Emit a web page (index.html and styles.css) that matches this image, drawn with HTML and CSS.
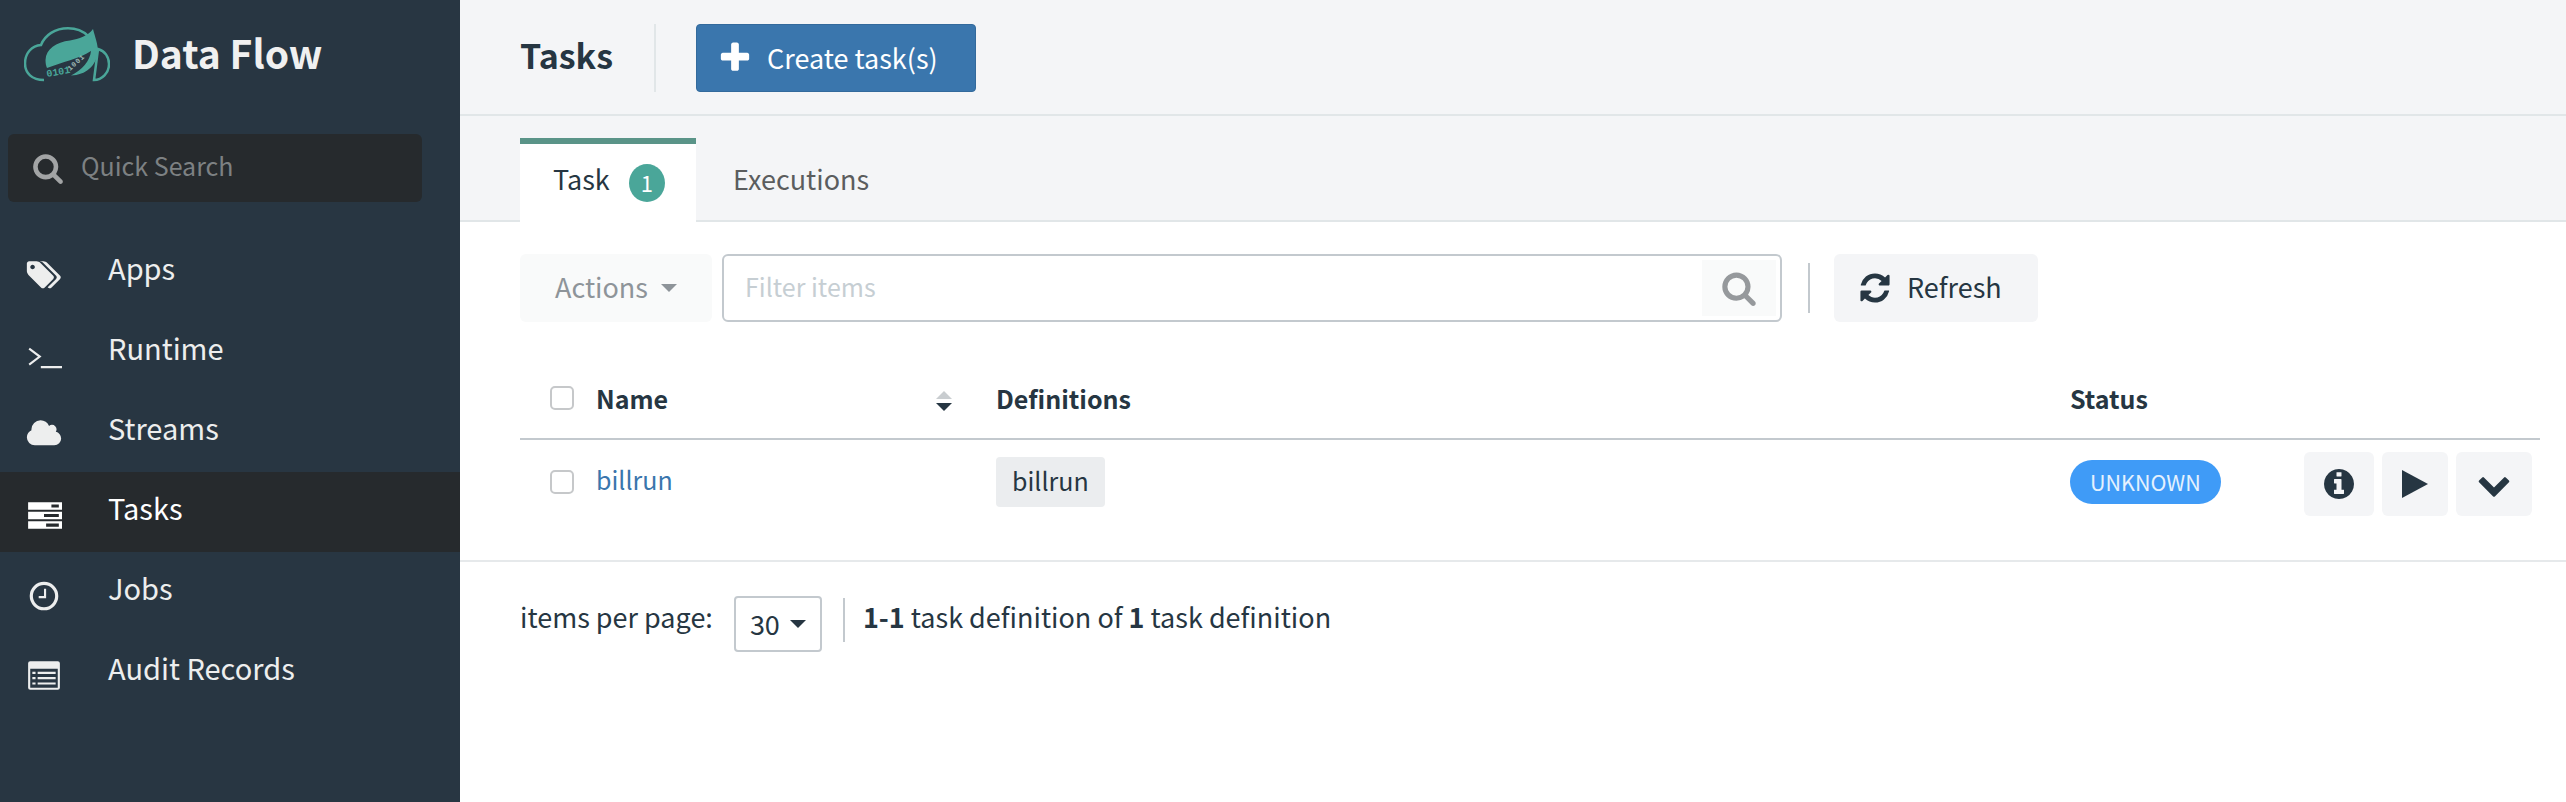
FILE: index.html
```html
<!DOCTYPE html>
<html lang="en">
<head>
  <meta charset="UTF-8" />
  <title>Data Flow - Tasks</title>
  <link rel="stylesheet" href="styles.css">
</head>
<body>
  <aside class="sidebar">
    <div class="brand">
      <svg class="brand-logo" viewBox="0 0 86 58" aria-hidden="true">
        <path class="cloud" d="M20 55C8 55 1 48 1 38.500C1 28 8 20.500 17 20C21 10 31 3.300 44 3.300C52 3.300 59 6 64 11M74 24C81 26 85 32 85 39C85 48 78 55 70 55Z"/>
        <path class="leaf" d="M69 4C64 11 55 14 46 15.500C32 17 22 24 21.500 35C21.500 38 22 41 23 43C38 37 55 34 67 26C66 36 58 45 47 50.500C62 50 72 41 74 27C74 19 71 12 69 4Z"/>
        <text class="bits" transform="translate(23 52) rotate(-10)">0101</text>
        <text class="bits bits-small" transform="translate(46 46) rotate(-42)">1001</text>
      </svg>
      <span class="brand-name">Data Flow</span>
    </div>
    <div class="quick-search">
      <svg class="icon" viewBox="0 0 1792 1792"><path d="M1216 832q0-185-131.500-316.500t-316.500-131.500-316.500 131.500-131.500 316.500 131.500 316.500 316.500 131.500 316.500-131.500 131.500-316.500zm512 832q0 52-38 90t-90 38q-54 0-90-38l-343-342q-179 124-399 124-143 0-273.500-55.500t-225-150-150-225-55.500-273.500 55.500-273.500 150-225 225-150 273.500-55.500 273.500 55.500 225 150 150 225 55.500 273.500q0 220-124 399l343 343q37 37 37 90z"/></svg>
      <span class="search-label">Quick Search</span>
    </div>
    <nav class="nav">
      <a class="nav-item">
        <svg class="nav-icon" viewBox="0 0 1920 1792"><path d="M448 448q0-53-37.500-90.500t-90.500-37.500-90.500 37.500-37.500 90.500 37.500 90.500 90.500 37.500 90.500-37.500 37.500-90.500zm1067 576q0 53-37 90l-491 492q-39 37-91 37-53 0-90-37l-715-716q-38-37-64.500-101t-26.500-117v-416q0-52 38-90t90-38h416q53 0 117 26.500t102 64.500l715 714q37 39 37 91zm384 0q0 53-37 90l-491 492q-39 37-91 37-36 0-59-14t-53-45l470-470q37-37 37-90 0-52-37-91l-715-714q-38-38-102-64.500t-117-26.500h224q53 0 117 26.500t102 64.500l715 714q37 39 37 91z"/></svg>
        <span class="nav-label">Apps</span>
      </a>
      <a class="nav-item">
        <svg class="nav-icon" viewBox="0 0 34 30"><path class="line" d="M3 9l10 7.500-10 7.500M14 26.500h21"/></svg>
        <span class="nav-label">Runtime</span>
      </a>
      <a class="nav-item">
        <svg class="nav-icon" viewBox="0 0 1920 1792"><path d="M1920 1152q0 159-112.500 271.500t-271.500 112.500h-1088q-185 0-316.500-131.500t-131.500-316.500q0-132 71-241.500t187-163.500q-2-28-2-43 0-212 150-362t362-150q158 0 286.500 88t187.500 230q70-62 166-62 106 0 181 75t75 181q0 75-41 138 129 30 213 134.500t84 239.500z" transform="translate(0 -60)"/></svg>
        <span class="nav-label">Streams</span>
      </a>
      <a class="nav-item active">
        <svg class="nav-icon" viewBox="0 0 34 30"><path fill-rule="evenodd" d="M2 3h32v7H2zM24 5v3h7V5zM2 12h32v7H2zM17 14v3h14v-3zM2 21h32v7H2zM19 23v3h12v-3z"/></svg>
        <span class="nav-label">Tasks</span>
      </a>
      <a class="nav-item">
        <svg class="nav-icon" viewBox="0 0 34 30"><circle class="line thick" cx="17" cy="16" r="12"/><path class="line" d="M18 9v8h-6"/></svg>
        <span class="nav-label">Jobs</span>
      </a>
      <a class="nav-item">
        <svg class="nav-icon" viewBox="0 0 34 30"><path fill-rule="evenodd" d="M4 2h26q2 0 2 2v23q0 2-2 2H4q-2 0-2-2V4q0-2 2-2zM4 9v18h26V9zM6 12h3v2H6zM11 12h17v2H11zM6 17h3v2H6zM11 17h17v2H11zM6 22h3v2H6zM11 22h17v2H11z"/></svg>
        <span class="nav-label">Audit Records</span>
      </a>
    </nav>
  </aside>

  <main class="main">
    <header class="page-header">
      <h1 class="page-title">Tasks</h1>
      <button type="button" class="btn-primary">
        <svg class="icon" viewBox="0 0 1792 1792"><path d="M1600 736v192q0 40-28 68t-68 28h-416v416q0 40-28 68t-68 28h-192q-40 0-68-28t-28-68v-416h-416q-40 0-68-28t-28-68v-192q0-40 28-68t68-28h416v-416q0-40 28-68t68-28h192q40 0 68 28t28 68v416h416q40 0 68 28t28 68z"/></svg>
        <span>Create task(s)</span>
      </button>
    </header>

    <div class="tabs">
      <a class="tab active"><span class="tab-label">Task</span> <span class="badge">1</span></a>
      <a class="tab"><span class="tab-label">Executions</span></a>
    </div>

    <section class="content">
      <div class="toolbar">
        <button type="button" class="btn-actions"><span class="lift">Actions</span> <i class="caret"></i></button>
        <div class="filter">
          <span class="filter-text">Filter items</span>
          <span class="filter-btn">
            <svg class="icon" viewBox="0 0 1792 1792"><path d="M1216 832q0-185-131.500-316.500t-316.500-131.500-316.500 131.500-131.500 316.500 131.500 316.500 316.500 131.500 316.500-131.500 131.500-316.500zm512 832q0 52-38 90t-90 38q-54 0-90-38l-343-342q-179 124-399 124-143 0-273.500-55.500t-225-150-150-225-55.500-273.500 55.500-273.500 150-225 225-150 273.500-55.500 273.500 55.500 225 150 150 225 55.500 273.500q0 220-124 399l343 343q37 37 37 90z"/></svg>
          </span>
        </div>
        <span class="toolbar-sep"></span>
        <button type="button" class="btn-refresh">
          <svg class="icon" viewBox="0 0 1792 1792"><path d="M1639 1056q0 5-1 7-64 268-268 434.500t-478 166.500q-146 0-282.500-55t-243.500-157l-129 129q-19 19-45 19t-45-19-19-45v-448q0-26 19-45t45-19h448q26 0 45 19t19 45-19 45l-137 137q71 66 161 102t187 36q134 0 250-65t186-179q11-17 53-117 8-23 30-23h192q13 0 22.500 9.500t9.500 22.500zm25-800v448q0 26-19 45t-45 19h-448q-26 0-45-19t-19-45 19-45l138-138q-148-137-349-137-134 0-250 65t-186 179q-11 17-53 117-8 23-30 23h-199q-13 0-22.500-9.500t-9.500-22.500v-7q65-268 270-434.500t480-166.500q146 0 284 55.500t245 156.500l130-129q19-19 45-19t45 19 19 45z"/></svg>
          <span class="lift">Refresh</span>
        </button>
      </div>

      <div class="table">
        <div class="table-row table-head">
          <span class="cell-check"><i class="checkbox"></i></span>
          <span class="cell-name">Name <i class="sort"></i></span>
          <span class="cell-def">Definitions</span>
          <span class="cell-status">Status</span>
        </div>
        <div class="table-row table-body">
          <span class="cell-check"><i class="checkbox"></i></span>
          <span class="cell-name"><a class="link">billrun</a></span>
          <span class="cell-def"><span class="chip">billrun</span></span>
          <span class="cell-status"><span class="pill">UNKNOWN</span></span>
          <span class="cell-actions">
            <button type="button" class="btn-icon btn-info">
              <svg viewBox="0 0 1536 1536"><path d="M1024 1248v-160q0-14-9-23t-23-9h-96V544q0-14-9-23t-23-9H544q-14 0-23 9t-9 23v160q0 14 9 23t23 9h96v320h-96q-14 0-23 9t-9 23v160q0 14 9 23t23 9h448q14 0 23-9t9-23zM896 352V192q0-14-9-23t-23-9H672q-14 0-23 9t-9 23v160q0 14 9 23t23 9h192q14 0 23-9t9-23zm640 416q0 209-103 385.500T1153.500 1433 768 1536t-385.500-103T103 1153.500 0 768t103-385.500T382.500 103 768 0t385.500 103T1433 382.500 1536 768z"/></svg>
            </button>
            <button type="button" class="btn-icon btn-play">
              <svg viewBox="0 0 26 28"><path d="M0 0L26 14L0 28Z"/></svg>
            </button>
            <button type="button" class="btn-icon btn-more">
              <svg viewBox="0 0 1792 1792"><path d="M1683 808l-742 741q-19 19-45 19t-45-19l-742-741q-19-19-19-45.500t19-45.500l166-165q19-19 45-19t45 19l531 531 531-531q19-19 45-19t45 19l166 165q19 19 19 45.500t-19 45.500z"/></svg>
            </button>
          </span>
        </div>
      </div>

      <div class="pager">
        <span class="pager-text">items per page:</span>
        <span class="page-size">30 <i class="caret"></i></span>
        <span class="pager-sep"></span>
        <span class="pager-text"><b>1-1</b> task definition of <b>1</b> task definition</span>
      </div>
    </section>
  </main>
</body>
</html>
```

FILE: styles.css
```css
/* Reset and base styles */
*, *::before, *::after {
  box-sizing: border-box;
}
body {
  margin: 0;
  display: flex;
  min-height: 100vh;
  font-family: "Noto Sans CJK SC", "Noto Sans", sans-serif;
  font-size: 27px;
  line-height: 36px;
  color: #263642;
  background: #fff;
}
button {
  border: none;
  font: inherit;
  padding: 0;
}
.icon {
  fill: currentColor;
  display: block;
}
.lift {
  padding-bottom: 3px;
}

/* Sidebar */
.sidebar {
  width: 460px;
  flex: none;
  background: #283642;
  color: #edeeee;
}
.brand {
  display: flex;
  align-items: center;
  height: 134px;
  padding: 0 0 28px 24px;
}
.brand-logo {
  width: 86px;
  height: 58px;
  margin-top: 2px;
}
.cloud {
  fill: none;
  stroke: #4aa699;
  stroke-width: 2.500;
}
.leaf {
  fill: #4aa699;
}
.bits {
  font-family: "Liberation Mono", monospace;
  font-size: 10px;
  font-weight: 700;
  fill: #4aa699;
}
.bits-small {
  font-size: 7px;
  letter-spacing: 1px;
  fill: #9fb9b5;
}
.brand-name {
  margin-left: 22px;
  padding-bottom: 3px;
  font-size: 39px;
  font-weight: 700;
  color: #f0f0f0;
}
.quick-search {
  display: flex;
  align-items: center;
  width: 414px;
  height: 68px;
  margin-left: 8px;
  margin-bottom: 30px;
  padding-left: 24px;
  background: #262a2d;
  border-radius: 6px;
  color: #7d8183;
  font-size: 25px;
}
.quick-search .icon {
  width: 32px;
  height: 32px;
  margin-right: 17px;
  color: #a2a4a5;
}
.search-label {
  padding-bottom: 6px;
}
.nav-item {
  display: flex;
  align-items: center;
  height: 80px;
  padding-left: 26px;
  font-size: 29px;
}
.nav-item.active {
  background: #262a2d;
  color: #fff;
}
.nav-icon {
  width: 36px;
  height: 32px;
  margin-right: 46px;
  margin-top: 6px;
  fill: currentColor;
}
.nav-label {
  padding-bottom: 10px;
}
.line {
  fill: none;
  stroke: currentColor;
  stroke-width: 2;
}
.line.thick {
  stroke-width: 3;
}

/* Main column */
.main {
  flex: 1;
  min-width: 0;
}
.page-header {
  display: flex;
  align-items: center;
  height: 116px;
  padding: 2px 0 0 60px;
  background: #f4f5f7;
  border-bottom: 2px solid #e1e6e8;
}
.page-title {
  width: 136px;
  height: 68px;
  margin: 0;
  line-height: 62px;
  font-size: 34px;
  font-weight: 700;
  border-right: 2px solid #e1e6e8;
}
.btn-primary {
  display: flex;
  align-items: center;
  width: 280px;
  height: 68px;
  margin-left: 40px;
  padding-left: 20px;
  background: #3a76ad;
  border: 1px solid #336a9c;
  border-radius: 4px;
  color: #fff;
}
.btn-primary .icon {
  width: 36px;
  height: 36px;
  margin-right: 14px;
}

.tabs {
  display: flex;
  height: 106px;
  padding: 22px 0 0 60px;
  background: #f4f5f7;
  border-bottom: 2px solid #e1e6e8;
}
.tab {
  height: 84px;
  display: flex;
  align-items: center;
  color: #5b5d5e;
  padding: 0 37px;
}
.tab-label {
  padding-bottom: 3px;
}
.tab.active {
  width: 176px;
  padding: 0 0 0 33px;
  background: #fff;
  border-top: 6px solid #5a9488;
  color: #263642;
}
.tab.active .tab-label {
  padding-bottom: 8px;
}
.badge {
  width: 36px;
  height: 38px;
  margin-left: 19px;
  border-radius: 50%;
  background: #4aa699;
  color: #fff;
  font-size: 22px;
  line-height: 37px;
  text-align: center;
}

/* Toolbar */
.toolbar {
  display: flex;
  align-items: center;
  padding: 32px 0 0 60px;
}
.btn-actions {
  display: flex;
  align-items: center;
  width: 192px;
  height: 68px;
  padding-left: 35px;
  background: #f9fafa;
  border-radius: 6px;
  color: #8e9499;
}
.caret {
  display: inline-block;
  width: 0;
  height: 0;
  margin-left: 13px;
  border-left: 8px solid transparent;
  border-right: 8px solid transparent;
  border-top: 8px solid currentColor;
}
.filter {
  display: flex;
  align-items: center;
  width: 1060px;
  height: 68px;
  margin-left: 10px;
  padding: 4px 4px 4px 21px;
  border: 2px solid #c3c9ce;
  border-radius: 6px;
}
.filter-text {
  flex: 1;
  padding-bottom: 4px;
  font-size: 25px;
  color: #c6ced3;
}
.filter-btn {
  display: flex;
  align-items: center;
  justify-content: center;
  width: 74px;
  height: 56px;
  background: #f9fafa;
  color: #96999c;
}
.filter-btn .icon {
  width: 36px;
  height: 36px;
}
.toolbar-sep {
  width: 2px;
  height: 50px;
  margin: 0 24px 0 26px;
  background: #c3c9ce;
}
.btn-refresh {
  display: flex;
  align-items: center;
  width: 204px;
  height: 68px;
  padding-left: 24px;
  background: #f4f5f7;
  border-radius: 6px;
  color: #263642;
}
.btn-refresh .icon {
  width: 34px;
  height: 34px;
  margin-right: 15px;
}

/* Table */
.table {
  margin: 40px 26px 0 60px;
}
.table-row {
  display: flex;
  align-items: center;
}
.table-head {
  height: 78px;
  padding-bottom: 4px;
  border-bottom: 2px solid #c3c9ce;
  font-weight: 700;
  font-size: 25px;
}
.table-body {
  height: 120px;
  padding-bottom: 36px;
  font-size: 25px;
}
.cell-check {
  width: 76px;
  flex: none;
  padding-left: 30px;
}
.checkbox {
  display: block;
  width: 24px;
  height: 24px;
  background: #fff;
  border: 2px solid #c6c8ca;
  border-radius: 5px;
}
.cell-name {
  position: relative;
  width: 400px;
  flex: none;
}
.table-body .cell-name {
  padding-bottom: 6px;
}
.sort {
  position: absolute;
  right: 44px;
  top: 23px;
  width: 0;
  height: 0;
  border-top: 8px solid #263642;
  border-left: 8px solid transparent;
  border-right: 8px solid transparent;
}
.sort::before {
  content: "";
  position: absolute;
  left: -8px;
  top: -20px;
  border-bottom: 8px solid #c9cdd0;
  border-left: 8px solid transparent;
  border-right: 8px solid transparent;
}
.cell-def {
  width: 1074px;
  flex: none;
}
.cell-status {
  width: 234px;
  flex: none;
}
.link {
  color: #3a76ad;
}
.chip {
  display: inline-block;
  height: 50px;
  padding: 5px 16px;
  background: #ebedef;
  border-radius: 4px;
  line-height: 36px;
}
.pill {
  display: inline-block;
  height: 44px;
  padding: 0 20px;
  background: #3f9bf7;
  border-radius: 22px;
  color: #e4f1fe;
  font-size: 21.500px;
  line-height: 43px;
}
.cell-actions {
  display: flex;
  gap: 8px;
  margin-top: 4px;
}
.btn-icon {
  display: flex;
  align-items: center;
  justify-content: center;
  height: 64px;
  background: #f4f5f7;
  border-radius: 6px;
}
.btn-icon svg {
  fill: #263642;
  display: block;
}
.btn-info {
  width: 70px;
}
.btn-info svg {
  width: 30px;
  height: 30px;
}
.btn-play {
  width: 66px;
}
.btn-play svg {
  width: 26px;
  height: 28px;
}
.btn-more {
  width: 76px;
}
.btn-more svg {
  width: 34px;
  height: 34px;
}

/* Footer */
.pager {
  display: flex;
  align-items: center;
  height: 126px;
  padding-left: 60px;
  border-top: 2px solid #e6e9eb;
}
.pager-text {
  padding-bottom: 14px;
}
.page-size {
  display: flex;
  align-items: center;
  width: 88px;
  height: 56px;
  margin-left: 21px;
  padding-left: 14px;
  border: 2px solid #c3c9ce;
  border-radius: 4px;
}
.page-size .caret {
  margin-left: 10px;
}
.pager-sep {
  width: 2px;
  height: 44px;
  margin: 0 18px 8px 21px;
  background: #c3c9ce;
}
```
